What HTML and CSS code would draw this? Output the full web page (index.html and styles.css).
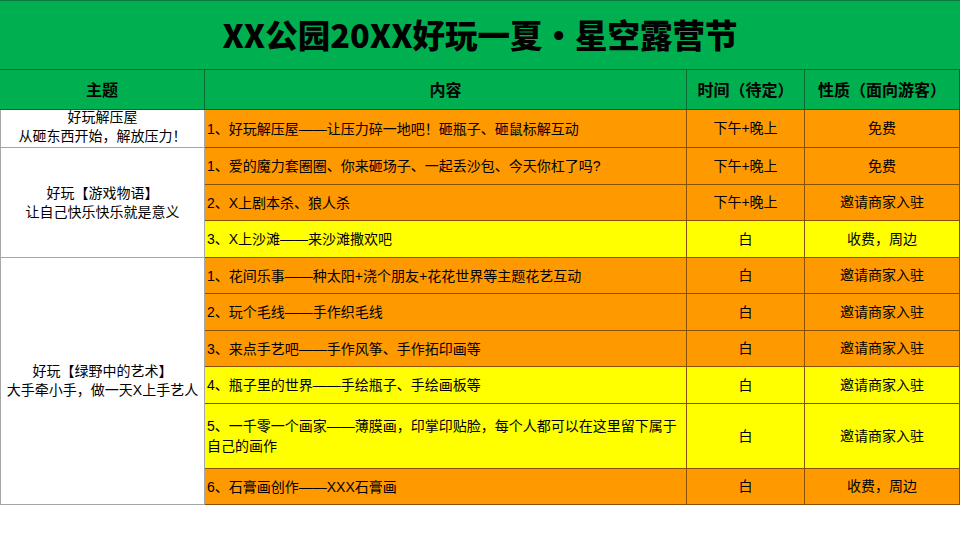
FILE: index.html
```html
<!DOCTYPE html>
<html lang="zh">
<head>
<meta charset="utf-8">
<link rel="stylesheet" href="styles.css">
</head>
<body>
<div class="page">
  <div class="title">XX公园20XX好玩一夏・星空露营节</div>
  <div class="plan">
    <div class="hd">主题</div>
    <div class="hd">内容</div>
    <div class="hd">时间（待定）</div>
    <div class="hd">性质（面向游客）</div>

    <div class="theme">好玩解压屋<br>从砸东西开始，解放压力！</div>
    <div class="orange content">1、好玩解压屋——让压力碎一地吧！砸瓶子、砸鼠标解互动</div>
    <div class="orange mid">下午+晚上</div>
    <div class="orange mid">免费</div>

    <div class="theme span3">好玩【游戏物语】<br>让自己快乐快乐就是意义</div>
    <div class="orange content">1、爱的魔力套圈圈、你来砸场子、一起丢沙包、今天你杠了吗?</div>
    <div class="orange mid">下午+晚上</div>
    <div class="orange mid">免费</div>
    <div class="orange content">2、X上剧本杀、狼人杀</div>
    <div class="orange mid">下午+晚上</div>
    <div class="orange mid">邀请商家入驻</div>
    <div class="yellow content">3、X上沙滩——来沙滩撒欢吧</div>
    <div class="yellow mid">白</div>
    <div class="yellow mid">收费，周边</div>

    <div class="theme span6">好玩【绿野中的艺术】<br>大手牵小手，做一天X上手艺人</div>
    <div class="orange content">1、花间乐事——种太阳+浇个朋友+花花世界等主题花艺互动</div>
    <div class="orange mid">白</div>
    <div class="orange mid">邀请商家入驻</div>
    <div class="orange content">2、玩个毛线——手作织毛线</div>
    <div class="orange mid">白</div>
    <div class="orange mid">邀请商家入驻</div>
    <div class="orange content">3、来点手艺吧——手作风筝、手作拓印画等</div>
    <div class="orange mid">白</div>
    <div class="orange mid">邀请商家入驻</div>
    <div class="yellow content">4、瓶子里的世界——手绘瓶子、手绘画板等</div>
    <div class="yellow mid">白</div>
    <div class="yellow mid">邀请商家入驻</div>
    <div class="yellow content">5、一千零一个画家——薄膜画，印掌印贴脸，每个人都可以在这里留下属于自己的画作</div>
    <div class="yellow mid">白</div>
    <div class="yellow mid">邀请商家入驻</div>
    <div class="orange content">6、石膏画创作——XXX石膏画</div>
    <div class="orange mid">白</div>
    <div class="orange mid">收费，周边</div>
  </div>
</div>
</body>
</html>
```
FILE: styles.css
```css
html, body {
  margin: 0;
  padding: 0;
  background: #ffffff;
}

body {
  font-family: "Liberation Sans", "Noto Sans CJK SC", sans-serif;
  color: #000000;
}

.page {
  width: 960px;
  height: 540px;
  overflow: hidden;
}

.title {
  box-sizing: border-box;
  height: 70px;
  background: #00b050;
  border-top: 1px solid #0b7a3a;
  border-bottom: 1px solid #0b6a30;
  display: flex;
  align-items: center;
  justify-content: center;
  font-family: "Noto Sans CJK SC", sans-serif;
  font-weight: 900;
  font-size: 32.5px;
  padding-bottom: 3px;
}

.plan {
  display: grid;
  grid-template-columns: 205px 482px 118px 155px;
  grid-template-rows: 40px 38px 37px 36px 37px 36px 37px 36px 37px 65px 36px;
}

.plan > div {
  box-sizing: border-box;
  border-right: 1px solid #8a5000;
  border-bottom: 1px solid #8a5000;
  font-size: 14px;
  line-height: 19px;
  display: flex;
  align-items: center;
}

.plan > .hd {
  background: #00b050;
  border-color: #0b6a30;
  justify-content: center;
  font-family: "Noto Sans CJK SC", sans-serif;
  font-weight: 700;
  font-size: 16px;
}

.plan > .theme {
  background: #ffffff;
  border-color: #a6a6a6;
  border-left: 1px solid #a6a6a6;
  justify-content: center;
  text-align: center;
  padding-bottom: 3px;
}

.plan > .span3 {
  grid-row: span 3;
  padding-bottom: 0;
}

.plan > .span6 {
  grid-row: span 6;
  padding-bottom: 0;
}

.orange {
  background: #ff9900;
}

.yellow {
  background: #ffff00;
}

.plan > .content {
  padding: 0 4px 0 2px;
  line-height: 20px;
}

.plan > .mid {
  justify-content: center;
  text-align: center;
}
```
